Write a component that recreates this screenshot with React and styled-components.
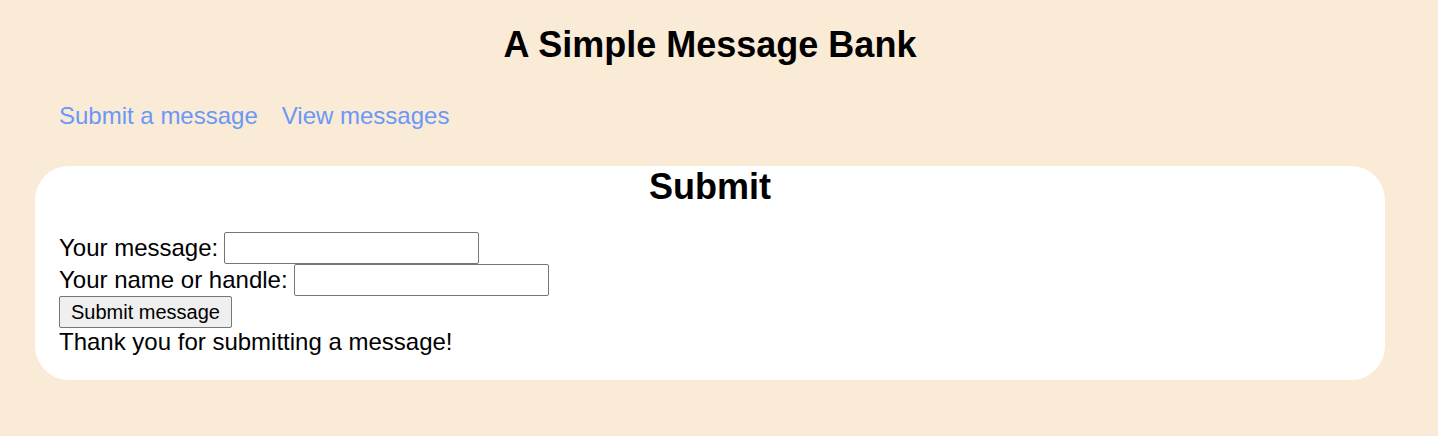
import React from "react";
import styled, { createGlobalStyle } from "styled-components";

const Global = createGlobalStyle`
  html, body { margin: 0; padding: 0; }
  body {
    background: #faebd7;
    font-family: "Liberation Sans", Arial, sans-serif;
    color: #000;
  }
`;

const Page = styled.div`
  width: 1350px;
  padding: 24px 0 56px 35px;
  display: flex;
  flex-direction: column;
`;

const Title = styled.h1`
  margin: 0;
  font-size: 36px;
  line-height: 41px;
  font-weight: bold;
  text-align: center;
`;

const Nav = styled.nav`
  display: flex;
  gap: 24px;
  padding: 39px 0 0 24px;
  height: 60px;
  box-sizing: border-box;
`;

const NavLink = styled.a`
  font-size: 24px;
  line-height: 24px;
  color: #6b97f7;
  text-decoration: none;
  cursor: pointer;
`;

const Card = styled.section`
  margin-top: 41px;
  background: #fff;
  border-radius: 34px;
  padding: 0 24px 24px;
  display: flex;
  flex-direction: column;
`;

const CardTitle = styled.h2`
  margin: 0 0 25px;
  font-size: 36px;
  line-height: 41px;
  font-weight: bold;
  text-align: center;
`;

const Row = styled.label`
  display: flex;
  align-items: center;
  height: 32px;
  font-size: 24px;
  gap: 6px;
`;

const Input = styled.input`
  width: 255px;
  height: 32px;
  box-sizing: border-box;
  border: 1px solid #767676;
  border-radius: 2px;
  font-size: 20px;
  font-family: inherit;
  padding: 2px 4px;
  background: #fff;
`;

const Button = styled.button`
  align-self: flex-start;
  width: 173px;
  height: 32px;
  box-sizing: border-box;
  border: 1px solid #767676;
  border-radius: 2px;
  background: #efefef;
  font-family: inherit;
  font-size: 20px;
  color: #000;
  padding: 0;
`;

const Note = styled.p`
  margin: 0;
  font-size: 24px;
  line-height: 28px;
`;

export default function App() {
  return (
    <>
      <Global />
      <Page>
        <Title>A Simple Message Bank</Title>
        <Nav>
          <NavLink>Submit a message</NavLink>
          <NavLink>View messages</NavLink>
        </Nav>
        <Card>
          <CardTitle>Submit</CardTitle>
          <Row>
            Your message: <Input type="text" />
          </Row>
          <Row>
            Your name or handle: <Input type="text" />
          </Row>
          <Button>Submit message</Button>
          <Note>Thank you for submitting a message!</Note>
        </Card>
      </Page>
    </>
  );
}
